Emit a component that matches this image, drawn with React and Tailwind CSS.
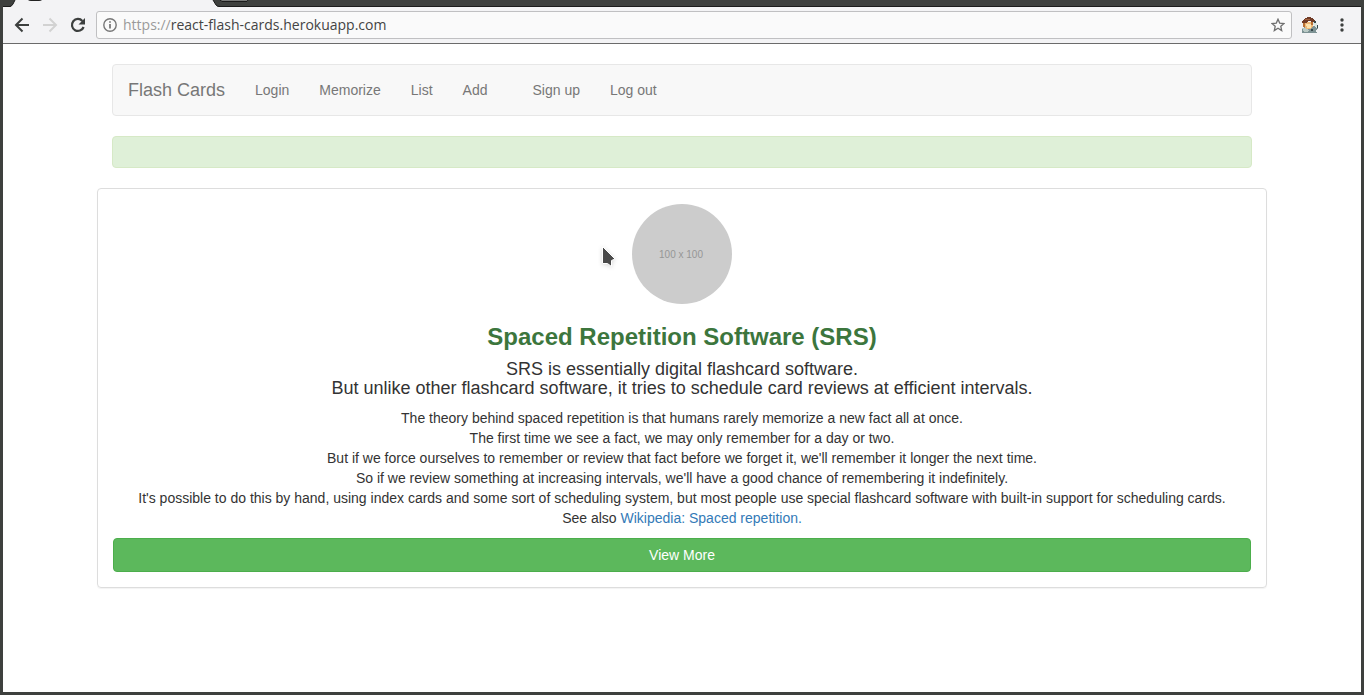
import React from 'react';

const primaryLinks = ['Login', 'Memorize', 'List', 'Add'];
const accountLinks = ['Sign up', 'Log out'];

function TabStrip() {
  return (
    <svg className="block h-[7px] w-full" aria-hidden="true">
      <rect width="100%" height="7" fill="#3e403e" />
      <rect y="6" width="100%" height="1" fill="#1b1b1b" />
      <path d="M0 7 L7 7 Q9 6 10 4 L12 0 H210 L213 5 Q214 7 217 7 Z" fill="#f3f3f5" />
      <path d="M0 6.5 H7 Q9 6 10 4 L12 0 M210 0 L213 5 Q214 6.500 217 6.500" fill="none" stroke="#1b1b1b" />
      <path d="M25 0 H39 Q38 1 36 1 H28 Q26 1 25 0 Z" fill="#222" />
      <path d="M217 0 H245 L244 1.500 H219 Z" fill="#d4d6d4" stroke="#1b1b1b" />
    </svg>
  );
}

function Avatar() {
  return (
    <svg width="18" height="18" viewBox="0 0 18 18" shapeRendering="crispEdges" aria-hidden="true">
      <path d="M1 12 L4 11 L9 13 L13 10 L16 12 L17 13 L15 14 L16 17 H1 Z" fill="#7d9294" />
      <path d="M1 12 H4 L8 14 L6 16 H3 Z" fill="#b9c9c5" />
      <path d="M3 6 H12 V10 L9 13 H6 L3 11 Z" fill="#efb878" />
      <path d="M5 8 H10 V12 H6 Z" fill="#fde3ae" />
      <path d="M1 5 L4 2 L8 1 L12 2 L14 5 V7 L11 6 L8 5 L5 7 L1 7 Z" fill="#713b26" />
      <path d="M4 3 H9 V4 H4 Z" fill="#a2613d" />
      <path d="M2 7 H4 V11 H2 Z M10 6 H12 V9 H10 Z" fill="#b96f32" />
      <path d="M12 6 L15 6 L17 10 L15 12 L12 9 Z" fill="#dbe6e2" />
      <path d="M13 5 H15 V7 H13 Z M16 9 H17 V12 H16 Z M10 13 H12 V15 H10 Z" fill="#34464a" />
    </svg>
  );
}

function Toolbar() {
  return (
    <div className="flex h-[37px] items-center border-b border-[#6b6b6b] bg-[#f3f3f5] pr-4 pl-[11px]">
      <button type="button" aria-label="Back" className="w-7">
        <svg width="16" height="16" viewBox="0 0 16 16" fill="none" stroke="#3c3f3e" strokeWidth="2">
          <path d="M15 8 H2.500 M8.500 1.500 L2 8 L8.500 14.500" />
        </svg>
      </button>
      <button type="button" aria-label="Forward" className="w-7">
        <svg width="16" height="16" viewBox="0 0 16 16" fill="none" stroke="#d2d2d2" strokeWidth="2">
          <path d="M1 8 H13.500 M7.500 1.500 L14 8 L7.500 14.500" />
        </svg>
      </button>
      <button type="button" aria-label="Reload" className="w-[26px]">
        <svg width="16" height="16" viewBox="0 0 16 16">
          <path d="M13.600 10 A6 6 0 1 1 12.400 3.900" fill="none" stroke="#3c3f3e" strokeWidth="2.200" />
          <path d="M15 1 V7.500 H8.500 Z" fill="#3c3f3e" />
        </svg>
      </button>
      <div className="flex h-7 flex-1 items-center rounded-[3px] border border-[#c0c0c2] bg-[#fafafa] px-[6px]">
        <svg width="14" height="14" viewBox="0 0 14 14" aria-hidden="true">
          <circle cx="7" cy="7" r="6.200" fill="none" stroke="#777" strokeWidth="1.400" />
          <path d="M6.200 6 H7.800 V10.500 H6.200 Z M6.200 3.200 H7.800 V4.700 H6.200 Z" fill="#6a6a6a" />
        </svg>
        <div className="ml-[6px] flex-1 font-['Open_Sans',sans-serif] text-sm text-[#444]">
          <span className="text-[#9a9a9a]">https://</span>react-flash-cards.herokuapp.com
        </div>
        <button type="button" aria-label="Bookmark this page">
          <svg width="14" height="14" viewBox="0 0 14 14" fill="none" stroke="#6f6f6f" strokeWidth="1.300">
            <path d="M7 1.200 L8.700 5.100 L13 5.500 L9.800 8.300 L10.700 12.600 L7 10.300 L3.300 12.600 L4.200 8.300 L1 5.500 L5.300 5.100 Z" />
          </svg>
        </button>
      </div>
      <button type="button" aria-label="Extension" className="ml-[9px]">
        <Avatar />
      </button>
      <button type="button" aria-label="Menu" className="ml-5">
        <svg width="6" height="16" viewBox="0 0 6 16" fill="#3c3f3e">
          <circle cx="3" cy="3" r="1.700" />
          <circle cx="3" cy="8" r="1.700" />
          <circle cx="3" cy="13" r="1.700" />
        </svg>
      </button>
    </div>
  );
}

function NavGroup({ links }) {
  return (
    <ul className="flex">
      {links.map((label) => (
        <li key={label}>
          <a href="#" className="block px-[15px] py-[15px]">{label}</a>
        </li>
      ))}
    </ul>
  );
}

function Pointer() {
  return (
    <svg className="absolute top-[42px] -left-8 drop-shadow-sm" width="18" height="24" viewBox="0 0 18 24" aria-hidden="true">
      <path d="M2.500 0.500 L15 13 L11.500 14.500 V20.500 L7.500 17.500 H2.500 Z" fill="#4a4a4a" stroke="#fff" strokeWidth="1" />
    </svg>
  );
}

export default function App() {
  return (
    <div className="flex min-h-screen flex-col bg-[#3e403e] px-[3px] pb-[3px] font-['Liberation_Sans',Arial,sans-serif] text-sm text-[#333]">
      <TabStrip />
      <Toolbar />
      <div className="flex-1 bg-white pt-5 pb-5">
        <div className="mx-auto flex max-w-[1170px] flex-col gap-5">
          <nav className="mx-[15px] flex flex-wrap items-center rounded border border-[#e7e7e7] bg-[#f8f8f8] leading-5 text-[#777]">
            <a href="#" className="px-[15px] py-[15px] text-lg leading-5">Flash Cards</a>
            <NavGroup links={primaryLinks} />
            <div className="ml-[15px]">
              <NavGroup links={accountLinks} />
            </div>
          </nav>
          <div role="status" className="mx-[15px] rounded border border-[#d6e9c6] bg-[#dff0d8] p-[15px]" />
          <main className="rounded border border-[#ddd] p-[15px] text-center shadow-[0_1px_1px_rgba(0,0,0,0.05)]">
            <div className="relative mx-auto flex size-[100px] items-center justify-center rounded-full bg-[#ccc] pt-[3px] pr-[2px] font-['Liberation_Sans',sans-serif] text-[10px] text-[#969696]">
              100 x 100
              <Pointer />
            </div>
            <h1 className="mt-5 text-2xl leading-[26px] font-bold text-[#3c763d]">Spaced Repetition Software (SRS)</h1>
            <h2 className="my-[10px] text-lg leading-[19px]">
              SRS is essentially digital flashcard software.
              <br />
              But unlike other flashcard software, it tries to schedule card reviews at efficient intervals.
            </h2>
            <p className="mb-[10px] leading-5">
              The theory behind spaced repetition is that humans rarely memorize a new fact all at once.
              <br />
              The first time we see a fact, we may only remember for a day or two.
              <br />
              But if we force ourselves to remember or review that fact before we forget it, we'll remember it longer the next time.
              <br />
              So if we review something at increasing intervals, we'll have a good chance of remembering it indefinitely.
              <br />
              It's possible to do this by hand, using index cards and some sort of scheduling system, but most people use special flashcard software with built-in support for scheduling cards.
              <br />
              See also <a href="https://en.wikipedia.org/wiki/Spaced_repetition" className="text-[#337ab7]">Wikipedia: Spaced repetition.</a>
            </p>
            <button type="button" className="block w-full rounded border border-[#4cae4c] bg-[#5cb85c] px-3 py-[6px] leading-5 text-white">
              View More
            </button>
          </main>
        </div>
      </div>
    </div>
  );
}
